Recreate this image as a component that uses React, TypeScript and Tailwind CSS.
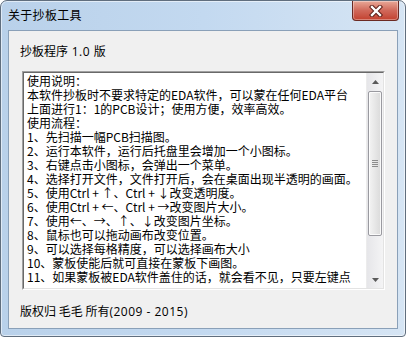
import React from 'react';

const lines = [
  '使用说明：',
  '本软件抄板时不要求特定的EDA软件，可以蒙在任何EDA平台',
  '上面进行1：1的PCB设计；使用方便，效率高效。',
  '使用流程：',
  '1、先扫描一幅PCB扫描图。',
  '2、运行本软件，运行后托盘里会增加一个小图标。',
  '3、右键点击小图标，会弹出一个菜单。',
  '4、选择打开文件，文件打开后，会在桌面出现半透明的画面。',
  '5、使用Ctrl + ↑、Ctrl + ↓改变透明度。',
  '6、使用Ctrl + ←、Ctrl + →改变图片大小。',
  '7、使用←、→、↑、↓改变图片坐标。',
  '8、鼠标也可以拖动画布改变位置。',
  '9、可以选择每格精度，可以选择画布大小',
  '10、蒙板使能后就可直接在蒙板下画图。',
  '11、如果蒙板被EDA软件盖住的话，就会看不见，只要左键点',
];

const font = { fontFamily: '"Noto Sans CJK SC", "Liberation Sans", sans-serif' };
const latin = { fontFamily: '"Open Sans", "Noto Sans CJK SC", sans-serif' };

// left/right arrows are full width in the original font
const Line: React.FC<{ text: string }> = ({ text }) => (
  <div className="whitespace-nowrap">
    {text.split(/([←→])/).map((part, i) =>
      part === '←' || part === '→' ? (
        <span key={i} className="inline-block w-[12px] text-center">{part}</span>
      ) : (
        <React.Fragment key={i}>{part}</React.Fragment>
      )
    )}
  </div>
);

const CloseButton: React.FC = () => (
  <div className="absolute top-0 right-[6px] w-[47px] h-[20px] rounded-b-[4px] border border-t-0 border-[#6b2a23] bg-linear-to-b from-[#e8a898] via-[#d0685a] to-[#c2402e] flex items-center justify-center shadow-[inset_0_0_0_1px_rgba(255,255,255,0.35)]">
    <svg width="14" height="12" viewBox="0 0 14 12">
      <path d="M3 2 L11 10 M11 2 L3 10" stroke="#5a1d16" strokeWidth="4.4" strokeLinecap="square" fill="none" />
      <path d="M3 2 L11 10 M11 2 L3 10" stroke="#ffffff" strokeWidth="2.4" strokeLinecap="square" fill="none" />
    </svg>
  </div>
);

const ScrollBar: React.FC = () => (
  <div className="w-[17px] flex flex-col bg-linear-to-r from-[#e6e6e9] to-[#f4f4f5] border-l border-[#ececec]">
    <div className="h-[17px] flex items-center justify-center">
      <svg width="7" height="4" viewBox="0 0 7 4">
        <path d="M3.5 0 L7 4 L0 4 Z" fill="#5a5a5a" />
      </svg>
    </div>
    <div className="flex-1 flex flex-col">
      <div className="mt-[1px] mx-[1px] h-[145px] rounded-[2px] border border-[#9a9aa0] bg-linear-to-r from-[#f4f4f4] to-[#dadada] shadow-[inset_0_0_0_1px_rgba(255,255,255,0.8)] flex flex-col items-center justify-center gap-[1px]">
        <div className="w-[6px] h-[1px] bg-[#8c8c8c]" />
        <div className="w-[6px] h-[1px] bg-[#8c8c8c]" />
        <div className="w-[6px] h-[1px] bg-[#8c8c8c]" />
        <div className="w-[6px] h-[1px] bg-[#8c8c8c]" />
      </div>
    </div>
    <div className="h-[17px] flex items-center justify-center">
      <svg width="7" height="4" viewBox="0 0 7 4">
        <path d="M0 0 L7 0 L3.5 4 Z" fill="#5a5a5a" />
      </svg>
    </div>
  </div>
);

export default function App() {
  return (
    <div className="w-[406px] h-[337px] bg-white" style={font}>
      <div className="relative w-[406px] h-[337px] rounded-t-[7px] rounded-b-[4px] border border-[#606e7e] bg-linear-to-r from-[#b9d1ea] via-[#c3d9f0] to-[#d6e5f4] shadow-[inset_0_0_0_1px_rgba(255,255,255,0.55)] flex flex-col px-[7px] pb-[7px]">
        <div className="h-[29px] flex items-start">
          <span className="mt-[6px] text-[12px] leading-[16px] text-black tracking-[0.3px]">关于抄板工具</span>
        </div>
        <CloseButton />
        <div className="flex-1 border border-[#8aa0b8] bg-[#f0f0f0] flex flex-col">
          <div className="pl-[11px] pt-[12px] text-[12px] leading-[16px] text-black">
            抄板程序<span style={latin} className="tracking-[0.5px]"> 1.0 </span>版
          </div>
          <div className="ml-[13px] mr-[12px] mt-[11px] h-[219px] border border-t-[#a0a0a0] border-l-[#a0a0a0] border-r-white border-b-white">
            <div className="h-full border border-t-[#696969] border-l-[#696969] border-r-[#e3e3e3] border-b-[#e3e3e3] bg-white flex">
              <div className="flex-1 overflow-hidden pl-[3px] pt-[1px] text-[12px] leading-[14px] text-black">
                {lines.map((l, i) => (
                  <Line key={i} text={l} />
                ))}
              </div>
              <ScrollBar />
            </div>
          </div>
          <div className="pl-[11px] mt-[13px] text-[12px] leading-[16px] text-black">
            版权归 毛毛 所有<span style={latin} className="tracking-[0.5px]">(2009 - 2015)</span>
          </div>
        </div>
      </div>
    </div>
  );
}
